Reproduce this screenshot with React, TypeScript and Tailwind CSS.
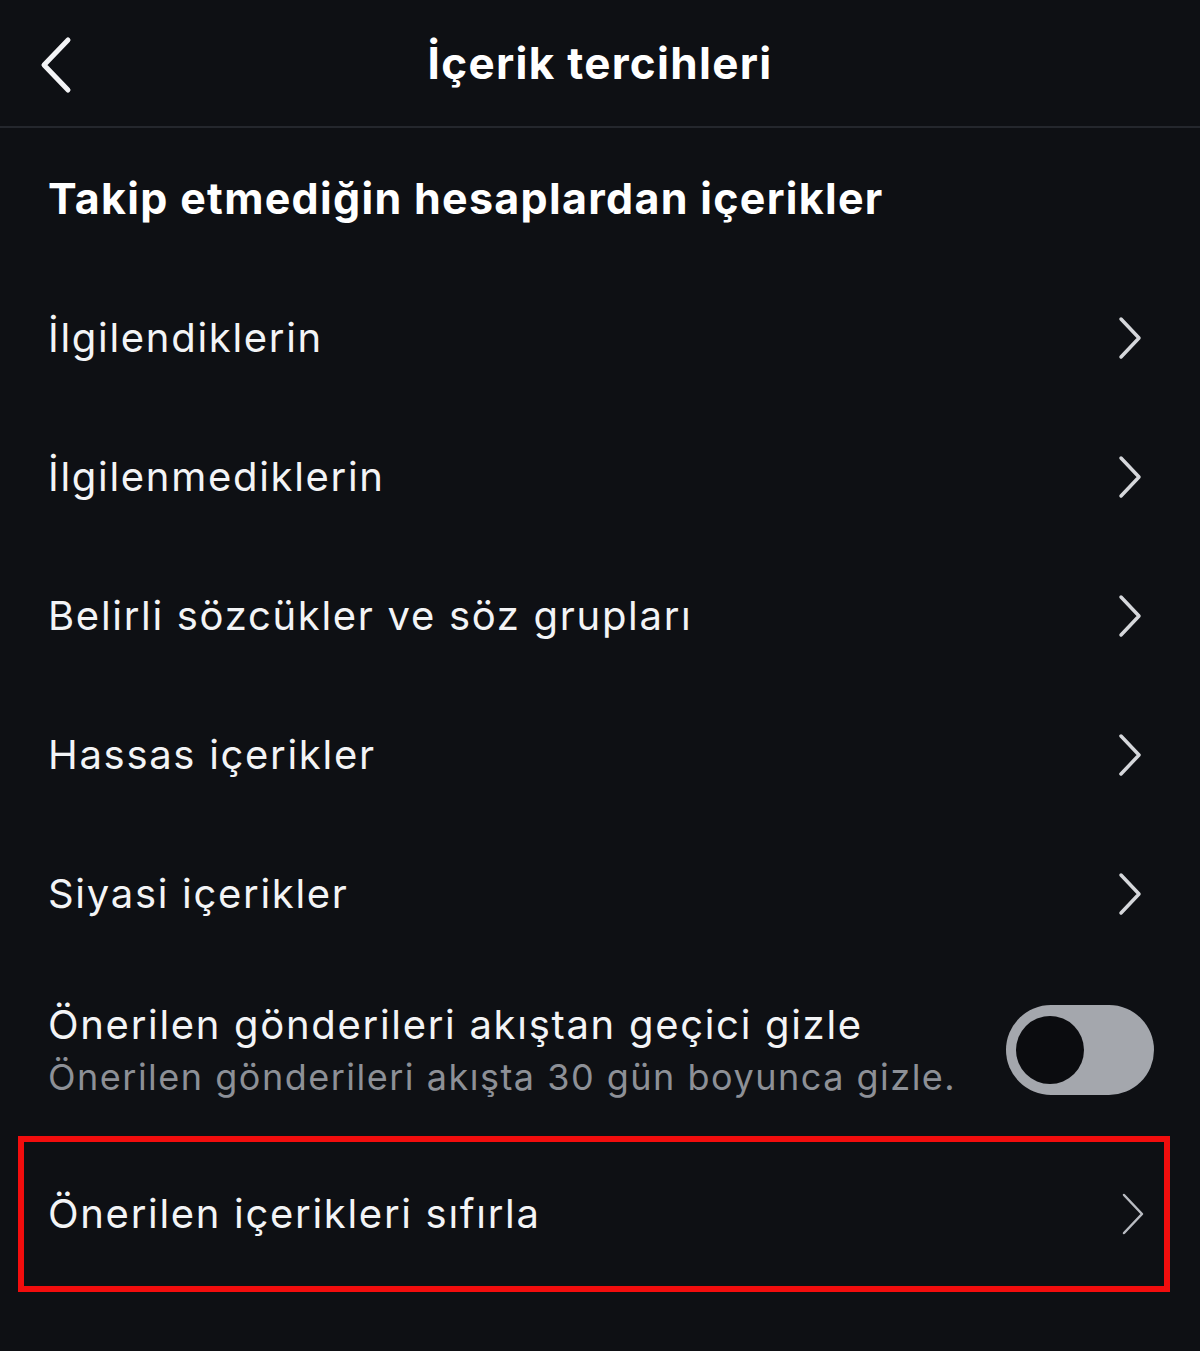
import { ReactNode } from 'react'

const font = { fontFamily: 'Inter, "Noto Sans", sans-serif' }

function Chevron({ thin }: { thin?: boolean }) {
  return (
    <svg width="28" height="44" viewBox="0 0 28 44" fill="none" className="shrink-0">
      <path
        d="M5 3 L23 22 L5 41"
        stroke={thin ? '#b9bcc2' : '#d5d7db'}
        strokeWidth={thin ? 2.5 : 3.5}
        strokeLinecap="round"
        strokeLinejoin="round"
      />
    </svg>
  )
}

function Row({ children }: { children: ReactNode }) {
  return (
    <div className="flex h-[139px] items-center justify-between pl-12 pr-[56px]">
      <span className="text-[40px] tracking-[1.7px] text-[#f3f4f6]">{children}</span>
      <Chevron />
    </div>
  )
}

export default function App() {
  const items = [
    'İlgilendiklerin',
    'İlgilenmediklerin',
    'Belirli sözcükler ve söz grupları',
    'Hassas içerikler',
    'Siyasi içerikler',
  ]

  return (
    <div className="min-h-[1351px] w-[1200px] bg-[#0e1014]" style={font}>
      {/* header */}
      <div className="relative flex h-[128px] items-center justify-center border-b-2 border-[#24272d]">
        <svg
          width="40"
          height="60"
          viewBox="0 0 40 60"
          fill="none"
          className="absolute left-[36px] top-[35px]"
        >
          <path
            d="M32 5 L8 30 L32 55"
            stroke="#f3f4f6"
            strokeWidth="5"
            strokeLinecap="round"
            strokeLinejoin="round"
          />
        </svg>
        <h1 className="text-[44px] font-bold tracking-[1.3px] text-white">İçerik tercihleri</h1>
      </div>

      {/* section title */}
      <div className="pl-12 pt-[38px] pb-[40px]">
        <h2 className="text-[43px] font-bold tracking-[1.3px] text-white">
          Takip etmediğin hesaplardan içerikler
        </h2>
      </div>

      <div className="-mt-[2px]">
        {items.map(item => (
          <Row key={item}>{item}</Row>
        ))}
      </div>

      {/* toggle row */}
      <div className="flex items-center justify-between pl-12 pr-[46px] pt-[34px]">
        <div className="flex flex-col">
          <span className="text-[40px] leading-[54px] tracking-[1.7px] text-[#f3f4f6]">
            Önerilen gönderileri akıştan geçici gizle
          </span>
          <span className="text-[36px] leading-[50px] tracking-[1.5px] text-[#8d9097]">
            Önerilen gönderileri akışta 30 gün boyunca gizle.
          </span>
        </div>
        <div className="flex h-[90px] w-[148px] items-center rounded-full bg-[#a4a7ad] px-[10px]">
          <div className="h-[68px] w-[68px] rounded-full bg-[#0b0c0f]" />
        </div>
      </div>

      {/* highlighted row */}
      <div className="ml-[18px] mr-[30px] mt-[34px] flex h-[156px] items-center justify-between border-[6px] border-[#f20d0d] pl-[24px] pr-[17px]">
        <span className="text-[40px] tracking-[1.7px] text-[#f3f4f6]">Önerilen içerikleri sıfırla</span>
        <Chevron thin />
      </div>
    </div>
  )
}
